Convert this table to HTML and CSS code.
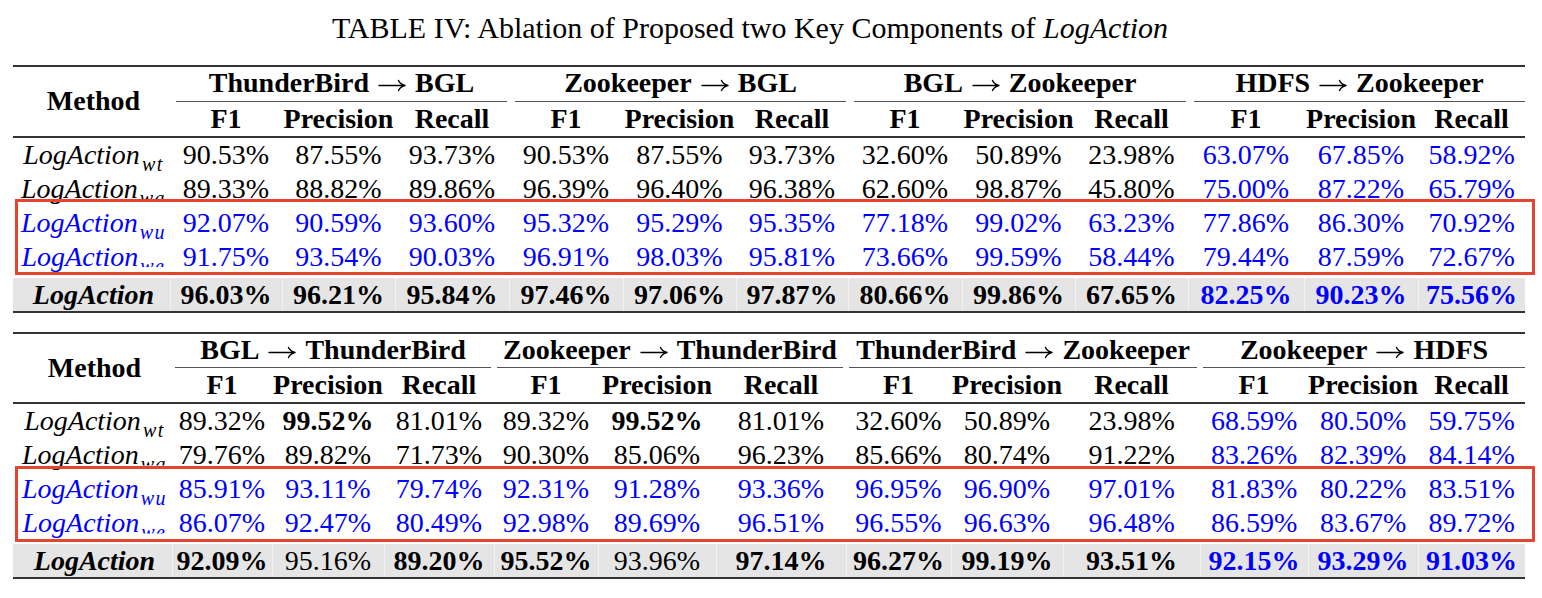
FILE: index.html
```html
<!DOCTYPE html>
<html lang="en">
<head>
<meta charset="utf-8">
<title>TABLE IV</title>
<link rel="stylesheet" href="styles.css">
</head>
<body>
<main class="page">
  <p class="caption">TABLE IV: Ablation of Proposed two Key Components of <i>LogAction</i></p>

  <div class="tbl-wrap">
    <table class="abl t1">
      <colgroup>
        <col><col><col><col><col><col><col><col><col><col><col><col><col>
      </colgroup>
      <thead>
        <tr class="top">
          <th class="method" rowspan="2">Method</th>
          <th class="grp" colspan="3"><span class="rule">ThunderBird<svg class="arr" viewBox="0 0 28 14" aria-hidden="true"><path d="M1 7.5H26M20.5 2.5Q22 6 27 7.5Q22 9 20.5 12.5"/></svg>BGL</span></th>
          <th class="grp" colspan="3"><span class="rule">Zookeeper<svg class="arr" viewBox="0 0 28 14" aria-hidden="true"><path d="M1 7.5H26M20.5 2.5Q22 6 27 7.5Q22 9 20.5 12.5"/></svg>BGL</span></th>
          <th class="grp" colspan="3"><span class="rule">BGL<svg class="arr" viewBox="0 0 28 14" aria-hidden="true"><path d="M1 7.5H26M20.5 2.5Q22 6 27 7.5Q22 9 20.5 12.5"/></svg>Zookeeper</span></th>
          <th class="grp last" colspan="3"><span class="rule">HDFS<svg class="arr" viewBox="0 0 28 14" aria-hidden="true"><path d="M1 7.5H26M20.5 2.5Q22 6 27 7.5Q22 9 20.5 12.5"/></svg>Zookeeper</span></th>
        </tr>
        <tr class="sub">
          <th>F1</th><th>Precision</th><th>Recall</th>
          <th>F1</th><th>Precision</th><th>Recall</th>
          <th>F1</th><th>Precision</th><th>Recall</th>
          <th>F1</th><th>Precision</th><th>Recall</th>
        </tr>
      </thead>
      <tbody>
        <tr>
          <td class="m">LogAction<sub>wt</sub></td>
          <td>90.53%</td><td>87.55%</td><td>93.73%</td>
          <td>90.53%</td><td>87.55%</td><td>93.73%</td>
          <td>32.60%</td><td>50.89%</td><td>23.98%</td>
          <td class="b">63.07%</td><td class="b">67.85%</td><td class="b">58.92%</td>
        </tr>
        <tr>
          <td class="m">LogAction<sub class="cut">wa</sub></td>
          <td>89.33%</td><td>88.82%</td><td>89.86%</td>
          <td>96.39%</td><td>96.40%</td><td>96.38%</td>
          <td>62.60%</td><td>98.87%</td><td>45.80%</td>
          <td class="b">75.00%</td><td class="b">87.22%</td><td class="b">65.79%</td>
        </tr>
        <tr class="hl">
          <td class="m">LogAction<sub>wu</sub></td>
          <td>92.07%</td><td>90.59%</td><td>93.60%</td>
          <td>95.32%</td><td>95.29%</td><td>95.35%</td>
          <td>77.18%</td><td>99.02%</td><td>63.23%</td>
          <td>77.86%</td><td>86.30%</td><td>70.92%</td>
        </tr>
        <tr class="hl">
          <td class="m">LogAction<sub class="cut">we</sub></td>
          <td>91.75%</td><td>93.54%</td><td>90.03%</td>
          <td>96.91%</td><td>98.03%</td><td>95.81%</td>
          <td>73.66%</td><td>99.59%</td><td>58.44%</td>
          <td>79.44%</td><td>87.59%</td><td>72.67%</td>
        </tr>
        <tr class="best">
          <td class="m">LogAction</td>
          <td>96.03%</td><td>96.21%</td><td>95.84%</td>
          <td>97.46%</td><td>97.06%</td><td>97.87%</td>
          <td>80.66%</td><td>99.86%</td><td>67.65%</td>
          <td class="b">82.25%</td><td class="b">90.23%</td><td class="b">75.56%</td>
        </tr>
      </tbody>
    </table>
    <div class="redbox"></div>
  </div>

  <div class="tbl-wrap second">
    <table class="abl t2">
      <colgroup>
        <col><col><col><col><col><col><col><col><col><col><col><col><col>
      </colgroup>
      <thead>
        <tr class="top">
          <th class="method" rowspan="2">Method</th>
          <th class="grp" colspan="3"><span class="rule">BGL<svg class="arr" viewBox="0 0 28 14" aria-hidden="true"><path d="M1 7.5H26M20.5 2.5Q22 6 27 7.5Q22 9 20.5 12.5"/></svg>ThunderBird</span></th>
          <th class="grp" colspan="3"><span class="rule">Zookeeper<svg class="arr" viewBox="0 0 28 14" aria-hidden="true"><path d="M1 7.5H26M20.5 2.5Q22 6 27 7.5Q22 9 20.5 12.5"/></svg>ThunderBird</span></th>
          <th class="grp" colspan="3"><span class="rule">ThunderBird<svg class="arr" viewBox="0 0 28 14" aria-hidden="true"><path d="M1 7.5H26M20.5 2.5Q22 6 27 7.5Q22 9 20.5 12.5"/></svg>Zookeeper</span></th>
          <th class="grp last" colspan="3"><span class="rule">Zookeeper<svg class="arr" viewBox="0 0 28 14" aria-hidden="true"><path d="M1 7.5H26M20.5 2.5Q22 6 27 7.5Q22 9 20.5 12.5"/></svg>HDFS</span></th>
        </tr>
        <tr class="sub">
          <th>F1</th><th>Precision</th><th>Recall</th>
          <th>F1</th><th>Precision</th><th>Recall</th>
          <th>F1</th><th>Precision</th><th>Recall</th>
          <th>F1</th><th>Precision</th><th>Recall</th>
        </tr>
      </thead>
      <tbody>
        <tr>
          <td class="m">LogAction<sub>wt</sub></td>
          <td>89.32%</td><td class="bold">99.52%</td><td>81.01%</td>
          <td>89.32%</td><td class="bold">99.52%</td><td>81.01%</td>
          <td>32.60%</td><td>50.89%</td><td>23.98%</td>
          <td class="b">68.59%</td><td class="b">80.50%</td><td class="b">59.75%</td>
        </tr>
        <tr>
          <td class="m">LogAction<sub class="cut">wa</sub></td>
          <td>79.76%</td><td>89.82%</td><td>71.73%</td>
          <td>90.30%</td><td>85.06%</td><td>96.23%</td>
          <td>85.66%</td><td>80.74%</td><td>91.22%</td>
          <td class="b">83.26%</td><td class="b">82.39%</td><td class="b">84.14%</td>
        </tr>
        <tr class="hl">
          <td class="m">LogAction<sub>wu</sub></td>
          <td>85.91%</td><td>93.11%</td><td>79.74%</td>
          <td>92.31%</td><td>91.28%</td><td>93.36%</td>
          <td>96.95%</td><td>96.90%</td><td>97.01%</td>
          <td>81.83%</td><td>80.22%</td><td>83.51%</td>
        </tr>
        <tr class="hl">
          <td class="m">LogAction<sub class="cut">we</sub></td>
          <td>86.07%</td><td>92.47%</td><td>80.49%</td>
          <td>92.98%</td><td>89.69%</td><td>96.51%</td>
          <td>96.55%</td><td>96.63%</td><td>96.48%</td>
          <td>86.59%</td><td>83.67%</td><td>89.72%</td>
        </tr>
        <tr class="best">
          <td class="m">LogAction</td>
          <td>92.09%</td><td class="nb">95.16%</td><td>89.20%</td>
          <td>95.52%</td><td class="nb">93.96%</td><td>97.14%</td>
          <td>96.27%</td><td>99.19%</td><td>93.51%</td>
          <td class="b">92.15%</td><td class="b">93.29%</td><td class="b">91.03%</td>
        </tr>
      </tbody>
    </table>
    <div class="redbox"></div>
  </div>
</main>
</body>
</html>
```

FILE: styles.css
```css
* { box-sizing: border-box; }

html, body {
  margin: 0;
  padding: 0;
  background: #fff;
}

body {
  width: 1542px;
  height: 598px;
  overflow: hidden;
  font-family: "Liberation Serif", "Times New Roman", Times, serif;
  color: #000;
}

.page {
  padding: 10px 0 0 13px;
}

.caption {
  margin: 0;
  width: 1512px;
  padding-right: 38px;
  text-align: center;
  font-size: 30px;
  line-height: 36px;
}

.caption i { font-style: italic; }

.tbl-wrap {
  position: relative;
  width: 1512px;
  margin-top: 19px;
}

.tbl-wrap.second { margin-top: 19px; }

.abl {
  border-collapse: separate;
  border-spacing: 0;
  table-layout: fixed;
  width: 1512px;
  font-size: 28px;
}

.abl th,
.abl td {
  padding: 0;
  text-align: center;
  white-space: nowrap;
  line-height: 34px;
  vertical-align: middle;
}

.abl th { font-weight: bold; }

.abl .top th { border-top: 2px solid #333; }
.abl .method { border-bottom: 2px solid #333; padding-left: 4px; }
.abl .sub th { border-bottom: 2px solid #333; }

.abl .grp .rule {
  display: block;
  line-height: 31.5px;
  padding-bottom: 2px;
  border-bottom: 1.5px solid #555;
  margin: 0 2px 0 6px;
}
.abl .grp.last .rule { margin-right: 0; }
.t2 .grp .rule { margin: 0 3px; }
.t2 .grp.last .rule { margin-right: 0; }

.abl .arr {
  display: inline-block;
  width: 28px;
  height: 14px;
  margin: 0 9px 0 9px;
  vertical-align: 0;
  fill: none;
  stroke: #000;
  stroke-width: 1.4;
  stroke-linecap: round;
  stroke-linejoin: round;
}

/* column widths */
.t1 col:nth-child(1) { width: 157px; }
.t1 col:nth-child(2) { width: 112px; }
.t1 col:nth-child(3) { width: 113px; }
.t1 col:nth-child(4) { width: 114px; }
.t1 col:nth-child(5) { width: 114px; }
.t1 col:nth-child(6) { width: 113px; }
.t1 col:nth-child(7) { width: 112px; }
.t1 col:nth-child(8) { width: 114px; }
.t1 col:nth-child(9) { width: 113px; }
.t1 col:nth-child(10) { width: 113px; }
.t1 col:nth-child(11) { width: 116px; }
.t1 col:nth-child(12) { width: 114px; }
.t1 col:nth-child(13) { width: 107px; }

.t2 col:nth-child(1) { width: 159px; }
.t2 col:nth-child(2) { width: 100px; }
.t2 col:nth-child(3) { width: 112px; }
.t2 col:nth-child(4) { width: 110px; }
.t2 col:nth-child(5) { width: 104px; }
.t2 col:nth-child(6) { width: 118px; }
.t2 col:nth-child(7) { width: 130px; }
.t2 col:nth-child(8) { width: 105px; }
.t2 col:nth-child(9) { width: 112px; }
.t2 col:nth-child(10) { width: 137px; }
.t2 col:nth-child(11) { width: 108px; }
.t2 col:nth-child(12) { width: 110px; }
.t2 col:nth-child(13) { width: 107px; }

/* body cells */
.abl td.m {
  font-style: italic;
  padding-left: 4px;
}

.abl sub {
  font-size: 20px;
  line-height: 0;
  vertical-align: -7px;
  letter-spacing: 1.5px;
  margin-left: 2px;
  font-style: italic;
}

.abl sub.cut { clip-path: inset(0 0 9.5px 0); }

.abl td.b,
.abl tr.hl td { color: #0000ff; }

.abl td.bold { font-weight: bold; }

.abl tr.best td {
  font-weight: bold;
  line-height: 33px;
  background: #e5e5e5;
  background-clip: padding-box;
  border-top: 4px solid transparent;
  border-bottom: 2px solid #333;
  box-shadow: inset 1px 0 0 #f3f3f3;
}
.abl tr.best td:first-child { box-shadow: none; }
.abl tr.best td.nb { font-weight: normal; }

.redbox {
  position: absolute;
  left: 2px;
  top: 134px;
  width: 1520px;
  height: 76px;
  border: 3px solid #e44530;
  pointer-events: none;
}
```
